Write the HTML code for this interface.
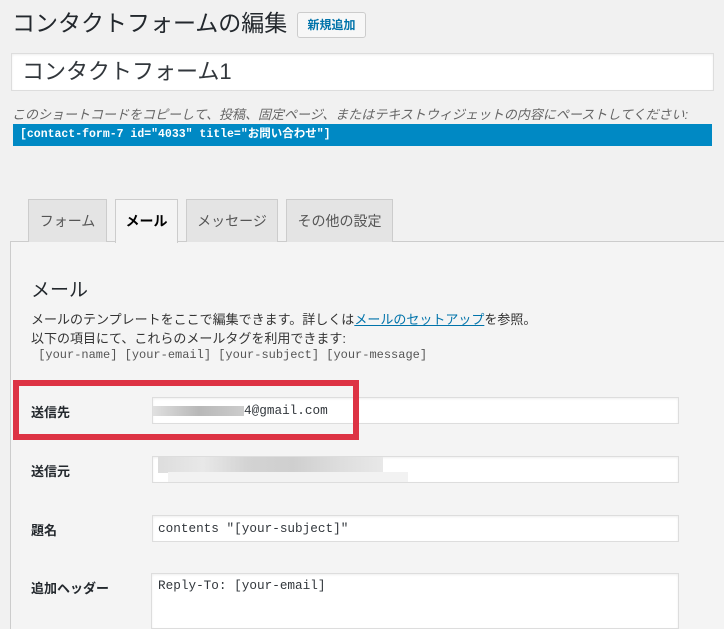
<!DOCTYPE html>
<html style="width:724px;height:629px;overflow:hidden"><head><meta charset="utf-8"><style>
*{box-sizing:border-box;margin:0;padding:0}
body{width:724px;height:629px;overflow:hidden;background:#f1f1f1;font-family:"Liberation Sans","Noto Sans CJK JP",sans-serif;color:#23282d;position:relative}
.a{position:absolute}
.mono{font-family:"Liberation Mono","Noto Sans CJK JP",monospace}
.inp{position:absolute;background:#fff;border:1px solid #ddd;box-shadow:inset 0 1px 2px rgba(0,0,0,.07)}
.tab{position:absolute;top:199px;height:43px;background:#e4e4e4;border:1px solid #ccc;border-bottom:none;font-size:14px;color:#555;text-align:center;line-height:42px}
.lbl{position:absolute;left:31px;font-size:13px;font-weight:bold;color:#23282d}
</style></head><body>
<div class="a" style="left:12px;top:6px;font-size:23px;line-height:34px;color:#23282d">コンタクトフォームの編集</div>
<div class="a" style="left:297px;top:12px;width:69px;height:26px;border:1px solid #ccc;background:#f7f7f7;border-radius:3px;font-size:12px;font-weight:bold;color:#0073aa;text-align:center;line-height:24px">新規追加</div>
<div class="inp" style="left:11px;top:53px;width:703px;height:38px;font-size:22px;line-height:36px;padding-left:10px;color:#32373c">コンタクトフォーム1</div>
<div class="a" style="left:12px;top:104px;font-size:13px;font-style:italic;color:#666;white-space:nowrap">このショートコードをコピーして、投稿、固定ページ、またはテキストウィジェットの内容にペーストしてください:</div>
<div class="a mono" style="left:13px;top:124px;width:699px;height:22px;background:#0089c4;color:#fff;font-size:11.5px;font-weight:bold;line-height:22px;padding-left:7px">[contact-form-7 id="4033" title="お問い合わせ"]</div>
<div class="a" style="left:10px;top:241px;width:720px;height:400px;border:1px solid #ccc;background:#f4f4f4"></div>
<div class="tab" style="left:28px;width:79px">フォーム</div>
<div class="tab" style="left:115px;width:63px;background:#f4f4f4;color:#000;font-weight:bold;height:44px;z-index:2">メール</div>
<div class="tab" style="left:186px;width:92px">メッセージ</div>
<div class="tab" style="left:286px;width:107px">その他の設定</div>
<div class="a" style="left:31px;top:275px;font-size:19px;color:#23282d">メール</div>
<div class="a" style="left:31px;top:310px;font-size:13px;line-height:19px;color:#333;white-space:nowrap">メールのテンプレートをここで編集できます。詳しくは<span style="color:#0073aa;text-decoration:underline">メールのセットアップ</span>を参照。<br>以下の項目にて、これらのメールタグを利用できます:</div>
<div class="a mono" style="left:31px;top:348px;font-size:12px;color:#555;white-space:pre"> [your-name] [your-email] [your-subject] [your-message]</div>
<div class="a" style="left:13px;top:380px;width:346px;height:60px;border:6px solid #dd3344;z-index:3"></div>
<div class="lbl" style="top:402px">送信先</div>
<div class="inp mono" style="left:152px;top:397px;width:527px;height:27px;font-size:12.7px;line-height:25px;padding-left:0">
<span style="display:inline-block;width:91px;height:10px;background:linear-gradient(90deg,#e0e0e0,#b8b8b8,#ccc);vertical-align:middle"></span><span style="color:#32373c">4@gmail.com</span></div>
<div class="lbl" style="top:461px">送信元</div>
<div class="inp" style="left:152px;top:456px;width:527px;height:27px;overflow:hidden">
<div class="a" style="left:5px;top:0;width:225px;height:16px;background:linear-gradient(90deg,#ddd,#e8e8e8,#d3d3d3,#cfcfcf,#ddd,#e8e8e8)"></div>
<div class="a" style="left:15px;top:15px;width:240px;height:16px;background:#f2f2f2"></div></div>
<div class="lbl" style="top:520px">題名</div>
<div class="inp mono" style="left:152px;top:515px;width:527px;height:27px;font-size:12.7px;line-height:25px;padding-left:5px;color:#32373c">contents "[your-subject]"</div>
<div class="lbl" style="top:578px">追加ヘッダー</div>
<div class="inp mono" style="left:151px;top:573px;width:528px;height:56px;font-size:12.7px;line-height:24px;padding-left:6px;color:#32373c">Reply-To: [your-email]</div>
</body></html>
